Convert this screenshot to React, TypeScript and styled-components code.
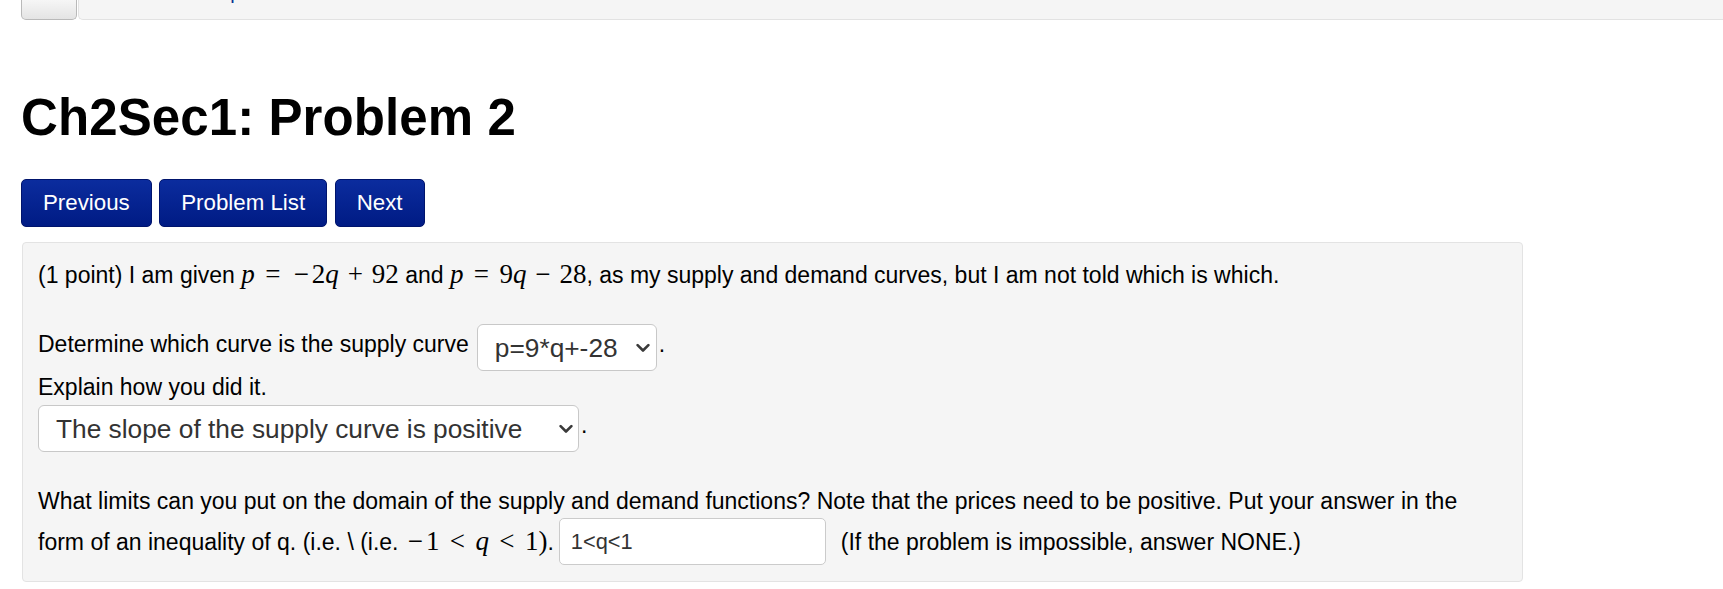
import React from 'react';
import styled, { createGlobalStyle } from 'styled-components';

const GlobalStyle = createGlobalStyle`
  html, body {
    margin: 0;
    padding: 0;
    background: #ffffff;
  }
  body {
    font-family: 'Liberation Sans', Helvetica, Arial, sans-serif;
    color: #000;
  }
`;

const Page = styled.div`
  padding: 0 21px;
  overflow: hidden;
`;

const TopBar = styled.div`
  display: flex;
  align-items: flex-end;
  height: 20px;
`;

const ToggleButton = styled.div`
  box-sizing: border-box;
  width: 56px;
  height: 20px;
  border: 1px solid #b9b9b9;
  border-top: none;
  border-radius: 0 0 5px 5px;
  background: linear-gradient(#f6f6f6, #e4e4e4);
`;

const CrumbBar = styled.div`
  box-sizing: border-box;
  flex: 1;
  margin-left: 1px;
  margin-right: -21px;
  height: 20px;
  padding-left: 19px;
  background: #f5f5f5;
  border-left: 1px solid #e2e2e2;
  border-bottom: 1px solid #e2e2e2;
  border-bottom-left-radius: 5px;
  overflow: hidden;
`;

const Crumb = styled.div`
  margin-top: -18px;
  font-size: 20px;
  line-height: 20px;
  color: #0a3191;
  white-space: nowrap;
`;

const Title = styled.h1`
  margin: 70px 0 0;
  font-size: 51px;
  line-height: 56px;
  font-weight: bold;
  letter-spacing: 0.1px;
`;

const ButtonRow = styled.div`
  display: flex;
  gap: 7.5px;
  margin-top: 33px;
`;

const NavButton = styled.button`
  box-sizing: border-box;
  height: 48px;
  padding: 0 21px;
  border: 1px solid #00146c;
  border-radius: 5px;
  background: linear-gradient(#0b2c9e, #001b84);
  color: #fff;
  font-family: 'Liberation Sans', Helvetica, Arial, sans-serif;
  font-size: 22.3px;
  cursor: pointer;
`;

const Panel = styled.div`
  box-sizing: border-box;
  width: 1501px;
  margin-top: 15px;
  margin-left: 1px;
  padding: 16px 15px 16px;
  background: #f5f5f5;
  border: 1px solid #e3e3e3;
  border-radius: 4px;
  font-size: 23px;
  line-height: 32px;
`;

const Line = styled.div<{ $gap?: number }>`
  margin-top: ${(p) => p.$gap ?? 0}px;
  white-space: nowrap;
`;

const Row = styled.div<{ $gap?: number }>`
  display: flex;
  align-items: flex-start;
  margin-top: ${(p) => p.$gap ?? 0}px;
  white-space: nowrap;
`;

const Label = styled.span<{ $drop?: number }>`
  margin-top: ${(p) => p.$drop ?? 0}px;
`;

const Dot = styled.span<{ $drop?: number }>`
  margin-top: ${(p) => p.$drop ?? 0}px;
  margin-left: 2px;
`;

const SelectBox = styled.div<{ $width: number; $offset?: number }>`
  position: relative;
  display: flex;
  width: ${(p) => p.$width}px;
  margin-left: ${(p) => p.$offset ?? 0}px;
`;

const NativeSelect = styled.select`
  box-sizing: border-box;
  width: 100%;
  height: 47px;
  padding: 0 30px 0 17px;
  appearance: none;
  -webkit-appearance: none;
  background: #fff;
  border: 1px solid #c8c8c8;
  border-radius: 6px;
  color: #333;
  font-family: 'Liberation Sans', Helvetica, Arial, sans-serif;
  font-size: 26.3px;
  outline: none;
`;

const Chevron = styled.svg`
  position: absolute;
  right: 6.5px;
  top: 50%;
  transform: translateY(-50%);
  pointer-events: none;
`;

const AnswerInput = styled.input`
  box-sizing: border-box;
  width: 267px;
  height: 47px;
  margin-left: 5px;
  padding: 0 11px;
  background: #fff;
  border: 1px solid #cbcbcb;
  border-radius: 5px;
  color: #333;
  font-family: 'Liberation Sans', Helvetica, Arial, sans-serif;
  font-size: 21.8px;
  outline: none;
`;

const Note = styled.span`
  margin-top: 8px;
  margin-left: 15px;
`;

const Math = styled.span`
  font-family: 'Liberation Serif', 'Times New Roman', serif;
  font-size: 27px;
  line-height: 27px;
`;

const Var = styled.span`
  font-style: italic;
`;

const Op = styled.span<{ $kind: 'rel' | 'bin' | 'un' }>`
  display: inline-block;
  text-align: center;
  width: ${(p) => (p.$kind === 'rel' ? 1.334 : p.$kind === 'bin' ? 1.222 : 0.778)}em;
`;

const ChevronIcon = () => (
  <Chevron width="14" height="9" viewBox="0 0 14 9">
    <polyline
      points="1.6,1.6 7,7 12.4,1.6"
      fill="none"
      stroke="#3a3a3a"
      strokeWidth="2.6"
      strokeLinecap="round"
      strokeLinejoin="round"
    />
  </Chevron>
);

const Dropdown: React.FC<{ width: number; offset?: number; value: string; options: string[] }> = ({
  width,
  offset,
  value,
  options,
}) => (
  <SelectBox $width={width} $offset={offset}>
    <NativeSelect defaultValue={value}>
      {options.map((o) => (
        <option key={o}>{o}</option>
      ))}
    </NativeSelect>
    <ChevronIcon />
  </SelectBox>
);

const App: React.FC = () => {
  return (
    <Page>
      <GlobalStyle />
      <TopBar>
        <ToggleButton />
        <CrumbBar>
          <Crumb>Courses / Sample Course / Ch2Sec1 / 2</Crumb>
        </CrumbBar>
      </TopBar>

      <Title>Ch2Sec1: Problem 2</Title>

      <ButtonRow>
        <NavButton>Previous</NavButton>
        <NavButton>Problem List</NavButton>
        <NavButton>Next</NavButton>
      </ButtonRow>

      <Panel>
        <Line>
          (1 point) I am given{' '}
          <Math>
            <Var>p</Var>
            <Op $kind="rel">=</Op>
            <Op $kind="un">−</Op>2<Var>q</Var>
            <Op $kind="bin">+</Op>92
          </Math>{' '}
          and{' '}
          <Math>
            <Var>p</Var>
            <Op $kind="rel">=</Op>9<Var>q</Var>
            <Op $kind="bin">−</Op>28
          </Math>
          , as my supply and demand curves, but I am not told which is which.
        </Line>

        <Row $gap={33}>
          <Label $drop={4}>Determine which curve is the supply curve</Label>
          <Dropdown
            width={180}
            offset={8}
            value="p=9*q+-28"
            options={['?', 'p=-2*q+92', 'p=9*q+-28']}
          />
          <Dot $drop={4}>.</Dot>
        </Row>

        <Line>Explain how you did it.</Line>

        <Row $gap={2}>
          <Dropdown
            width={541}
            value="The slope of the supply curve is positive"
            options={[
              '?',
              'The slope of the supply curve is positive',
              'The slope of the supply curve is negative',
            ]}
          />
          <Dot $drop={4}>.</Dot>
        </Row>

        <Line $gap={33}>
          What limits can you put on the domain of the supply and demand functions? Note that the
          prices need to be positive. Put your answer in the
        </Line>

        <Row $gap={1}>
          <Label $drop={8}>
            form of an inequality of q. (i.e. \ (i.e.{' '}
            <Math>
              <Op $kind="un">−</Op>1<Op $kind="rel">&lt;</Op>
              <Var>q</Var>
              <Op $kind="rel">&lt;</Op>1)
            </Math>
            .
          </Label>
          <AnswerInput defaultValue="1<q<1" />
          <Note>(If the problem is impossible, answer NONE.)</Note>
        </Row>
      </Panel>
    </Page>
  );
};

export default App;
